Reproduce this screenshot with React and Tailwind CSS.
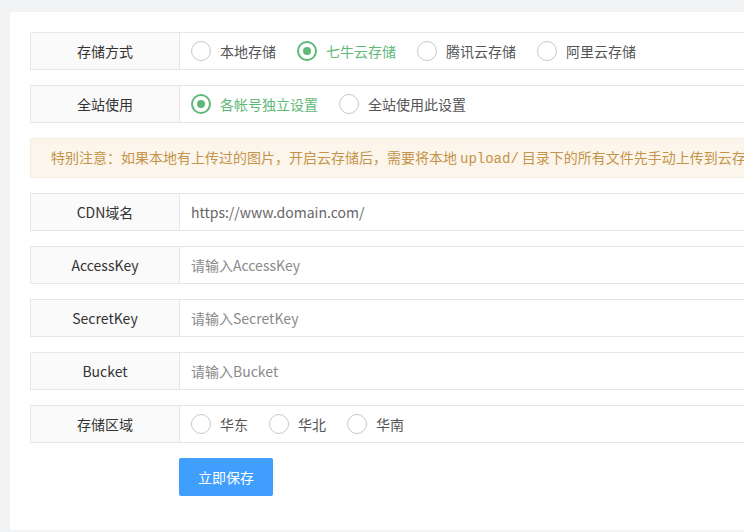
import React from "react";

const font = { fontFamily: '"Microsoft YaHei", "Noto Sans CJK SC", "Noto Sans", sans-serif' };

function Radio({ label, checked }) {
  return (
    <div className="flex items-center mr-[21px] shrink-0">
      <div
        className={
          checked
            ? "w-5 h-5 rounded-full border-2 border-[#5FB878] flex items-center justify-center"
            : "w-5 h-5 rounded-full border-[1.5px] border-[#c8c8c8]"
        }
      >
        {checked && <div className="w-2 h-2 rounded-full bg-[#5FB878]" />}
      </div>
      <span className={"ml-[9px] text-[14px] " + (checked ? "text-[#5FB878]" : "text-[#555]")}>{label}</span>
    </div>
  );
}

function Row({ label, children }) {
  return (
    <div className="flex h-[38px] border border-[#e6e6e6] shrink-0">
      <div className="w-[149px] shrink-0 bg-[#fafafa] border-r border-[#e6e6e6] flex items-center justify-center text-[14px] text-[#333]">
        {label}
      </div>
      <div className="flex-1 flex items-center pl-[11px] bg-white">{children}</div>
    </div>
  );
}

function InputRow({ label, value, placeholder }) {
  return (
    <Row label={label}>
      {value ? (
        <span className="text-[14px] text-[#666]">{value}</span>
      ) : (
        <span className="text-[14px] text-[#8a8a8a]">{placeholder}</span>
      )}
    </Row>
  );
}

export default function App() {
  return (
    <div className="w-[744px] h-[532px] overflow-hidden bg-[#f2f3f5] pl-[10px] pt-[12px]" style={font}>
      <div className="w-[1000px] h-[518px] bg-white rounded-[2px] p-[20px] flex flex-col gap-[15px]">
        <Row label="存储方式">
          <Radio label="本地存储" />
          <Radio label="七牛云存储" checked />
          <Radio label="腾讯云存储" />
          <Radio label="阿里云存储" />
        </Row>
        <Row label="全站使用">
          <Radio label="各帐号独立设置" checked />
          <Radio label="全站使用此设置" />
        </Row>
        <div className="h-[40px] shrink-0 bg-[#fcf5ec] border border-[#f7ece0] flex items-center pl-[20px] text-[14px] text-[#c4944a] whitespace-nowrap">
          <p>
            特别注意：如果本地有上传过的图片，开启云存储后，需要将本地
            <span className="mx-[3px] text-[14px]" style={{ fontFamily: '"Liberation Mono", "DejaVu Sans Mono", monospace' }}>upload/</span>
            目录下的所有文件先手动上传到云存储
          </p>
        </div>
        <InputRow label="CDN域名" value="https://www.domain.com/" />
        <InputRow label="AccessKey" placeholder="请输入AccessKey" />
        <InputRow label="SecretKey" placeholder="请输入SecretKey" />
        <InputRow label="Bucket" placeholder="请输入Bucket" />
        <Row label="存储区域">
          <Radio label="华东" />
          <Radio label="华北" />
          <Radio label="华南" />
        </Row>
        <div className="pl-[149px]">
          <button className="w-[94px] h-[38px] bg-[#409eff] text-white text-[14px] rounded-[2px]">立即保存</button>
        </div>
      </div>
    </div>
  );
}
